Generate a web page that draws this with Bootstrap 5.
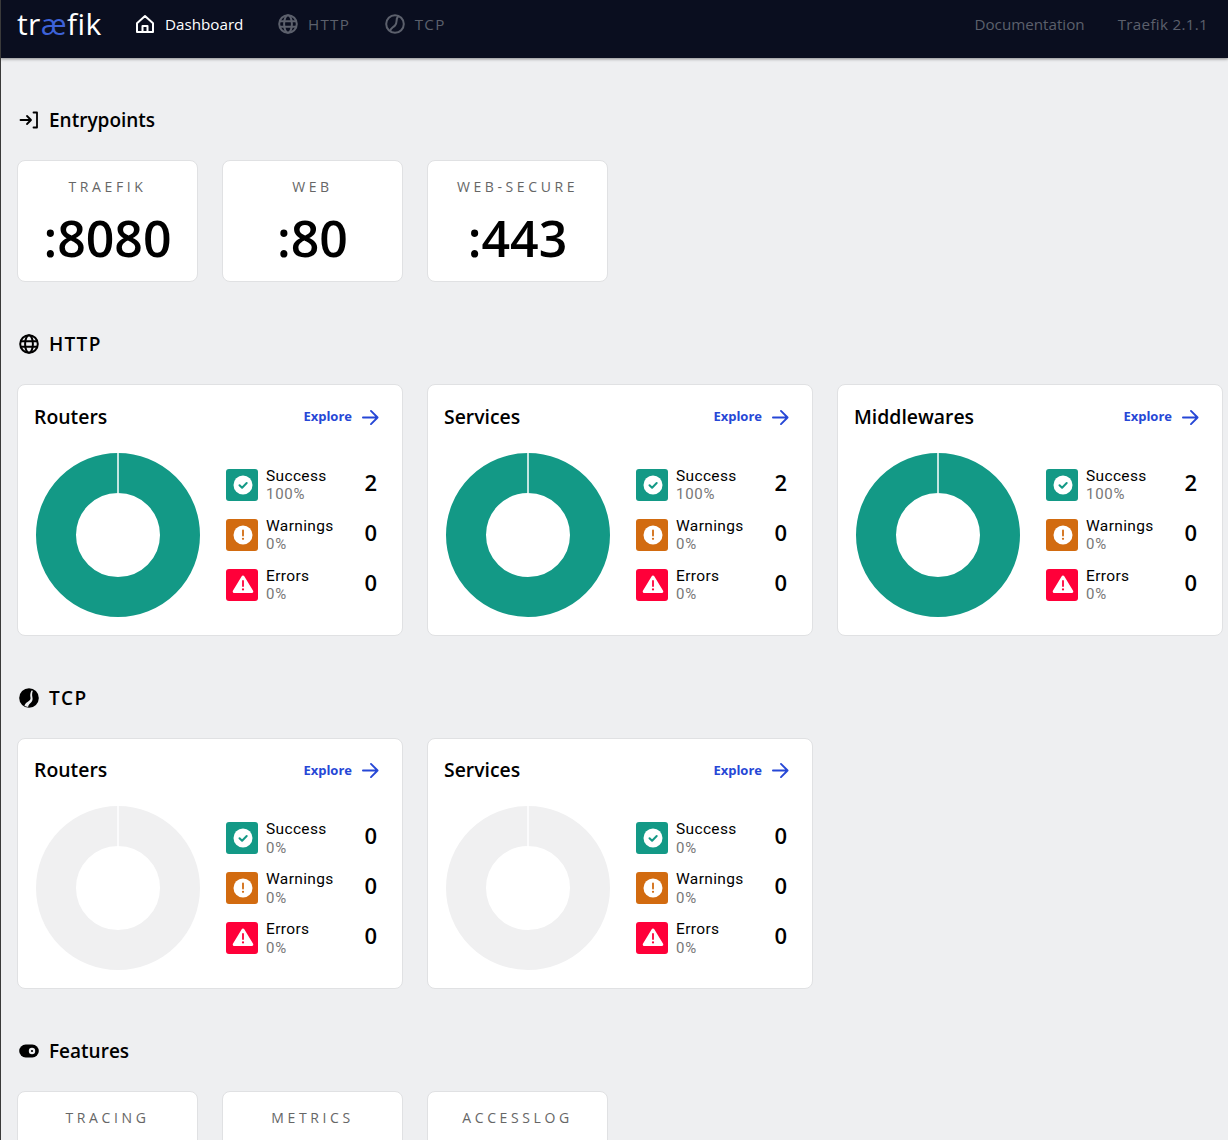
<!doctype html>
<html lang="en">
<head>
<meta charset="utf-8">
<title>Traefik</title>
<link href="https://cdn.jsdelivr.net/npm/bootstrap@5.3.0/dist/css/bootstrap.min.css" rel="stylesheet">
<style>
html,body{height:1140px;overflow:hidden}
body{background:#eeeff1;font-family:"Open Sans","Noto Sans",sans-serif;color:#000;border-left:1px solid #3a3a3a}
.topbar{height:58px;background:#0a0e1f;margin-left:-1px;padding:0 20px 10px 17px;box-shadow:0 1px 3px rgba(0,0,0,.45)}
.brand{font-size:30px;line-height:1;color:#fff;font-weight:500;letter-spacing:.4px;width:85px;margin-right:33px;white-space:nowrap}
.brand span{color:#3d62d8}
.tab{display:flex;align-items:center;gap:10px;font-size:15.2px;color:#5c606c;margin-right:34.5px;text-decoration:none}
.tab.on{color:#fff}
.tab svg{width:20px;height:20px}
.caps{letter-spacing:1.3px}
.tab-r{margin-right:0;margin-left:33px}
.ver{letter-spacing:.3px}
.page{padding:48px 0 0 16px}
.sect{margin-bottom:48px}
.sect-h{height:28px;margin-bottom:26px;font-size:19px;font-weight:600;line-height:28px;gap:10px;padding-left:2px}
.sect-h svg{width:20px;height:20px;flex:none}
.sect-caps{letter-spacing:1.3px}
.tile{width:181px;height:122px;background:#fff;border:1px solid #e0e1e3;border-radius:8px;text-align:center;flex:none}
.tile-l{font-size:14px;letter-spacing:3.6px;color:#666;line-height:18px;padding-top:17px}
.tile-v{font-size:50px;font-weight:600;line-height:60px;margin-top:12px}
.panel{width:386px;height:251.5px;background:#fff;border:1px solid #e0e1e3;border-radius:8px;padding:15.75px 16px 0;flex:none}
.panel-h{height:31.75px;margin-bottom:20px}
.panel-t{font-size:19.4px;font-weight:600;line-height:31px;padding-bottom:1px}
.explore{font-size:13px;font-weight:700;color:#2647d6;text-decoration:none;gap:10px;padding-right:7px;margin-top:1px}
.explore svg{width:17px;height:17px}
.donut{width:164px;height:164px;margin-left:2px;margin-right:26px;flex:none}
.stats{width:151px;padding-top:16px}
.stat{height:32px;margin-bottom:18px}
.ico{width:32px;height:32px;border-radius:3px;flex:none;margin-right:8px}
.ico svg{width:32px;height:32px;display:block}
.i-ok{background:#139986}.i-warn{background:#d26b10}.i-err{background:#ff0039}
.stat-txt{font-family:Roboto,"Open Sans",sans-serif;line-height:1}
.stat-l{font-size:15.5px;line-height:18px;margin-top:-2px;letter-spacing:.35px}
.stat-p{font-size:15px;line-height:18px;margin-top:.75px;color:#777;letter-spacing:.7px}
.stat-v{font-size:22px;font-weight:600;line-height:26px;margin-left:auto;margin-top:.25px}
</style>
</head>
<body>
<svg width="0" height="0" class="position-absolute">
<defs>
<symbol id="s-ok" viewBox="0 0 32 32"><circle cx="17" cy="16" r="9.5" fill="#fff"/><path d="M13.5 16.2l2.6 2.6 4.6-4.8" fill="none" stroke="#139986" stroke-width="2" stroke-linecap="round" stroke-linejoin="round"/></symbol>
<symbol id="s-warn" viewBox="0 0 32 32"><circle cx="17" cy="16" r="9.5" fill="#fff"/><path d="M17 11.5v5" stroke="#d26b10" stroke-width="1.8" stroke-linecap="round"/><circle cx="17" cy="19.8" r="1.1" fill="#d26b10"/></symbol>
<symbol id="s-err" viewBox="0 0 32 32"><path d="M17 8l8.8 14.5H8.2z" fill="#fff" stroke="#fff" stroke-width="3" stroke-linejoin="round"/><path d="M17 12v5" stroke="#ff0039" stroke-width="1.8" stroke-linecap="round"/><circle cx="17" cy="20.4" r="1.1" fill="#ff0039"/></symbol>
<symbol id="s-arrow" viewBox="0 0 18 18"><path d="M1 9h15.500M9.500 2l7 7-7 7" fill="none" stroke="#2647d6" stroke-width="2" stroke-linecap="round" stroke-linejoin="round"/></symbol>
<symbol id="s-globe" viewBox="0 0 20 20"><g fill="none" stroke="currentColor" stroke-width="2"><circle cx="10" cy="10" r="8.8"/><ellipse cx="10" cy="10" rx="3.9" ry="8.8"/><path d="M1.5 7.2h17M1.5 12.8h17"/></g></symbol>
<symbol id="s-donut-ok" viewBox="0 0 164 164"><circle cx="82" cy="82" r="62" fill="none" stroke="#139986" stroke-width="40"/><path d="M82 0v40" stroke="#fff" stroke-width="1.5"/></symbol>
<symbol id="s-donut-none" viewBox="0 0 164 164"><circle cx="82" cy="82" r="62" fill="none" stroke="#f0f0f1" stroke-width="40"/><path d="M82 0v40" stroke="#fff" stroke-width="1.5"/></symbol>
</defs>
</svg>

<nav class="topbar d-flex align-items-center">
  <div class="brand">tr<span>æ</span>fik</div>
  <a class="tab on" href="#"><svg viewBox="0 0 20 20"><path d="M2 9.2 10 2l8 7.2V18H2zM7.5 18v-6h5v6" fill="none" stroke="#fff" stroke-width="2" stroke-linejoin="round"/></svg>Dashboard</a>
  <a class="tab" href="#"><svg><use href="#s-globe"/></svg><span class="caps">HTTP</span></a>
  <a class="tab" href="#"><svg viewBox="0 0 20 20"><g fill="none" stroke="#5c606c" stroke-width="2"><circle cx="10" cy="10" r="8.8"/><path d="M13.500 2C10 5 13 8.500 10 11.500 7.500 14 5.500 14 5 17.500"/></g></svg><span class="caps">TCP</span></a>
  <a class="tab tab-r ms-auto" href="#">Documentation</a>
  <a class="tab tab-r ver" href="#">Traefik 2.1.1</a>
</nav>

<main class="page">
  <section class="sect">
    <h2 class="sect-h d-flex align-items-center"><svg viewBox="0 0 20 20"><path d="M1.5 10h10M8 6l4 4-4 4M14.500 2.500H18v15h-3.500" fill="none" stroke="#000" stroke-width="1.8" stroke-linecap="round" stroke-linejoin="round"/></svg>Entrypoints</h2>
    <div class="d-flex gap-4">
      <div class="tile"><div class="tile-l">TRAEFIK</div><div class="tile-v">:8080</div></div>
      <div class="tile"><div class="tile-l">WEB</div><div class="tile-v">:80</div></div>
      <div class="tile"><div class="tile-l">WEB-SECURE</div><div class="tile-v">:443</div></div>
    </div>
  </section>

  <section class="sect">
    <h2 class="sect-h d-flex align-items-center"><svg><use href="#s-globe"/></svg><span class="sect-caps">HTTP</span></h2>
    <div class="d-flex gap-4">
      <div class="panel">
        <div class="panel-h d-flex align-items-center justify-content-between"><span class="panel-t">Routers</span><a class="explore d-flex align-items-center" href="#">Explore<svg><use href="#s-arrow"/></svg></a></div>
        <div class="d-flex">
          <svg class="donut"><use href="#s-donut-ok"/></svg>
          <div class="stats">
            <div class="stat d-flex"><div class="ico i-ok"><svg><use href="#s-ok"/></svg></div><div class="stat-txt"><div class="stat-l">Success</div><div class="stat-p">100%</div></div><div class="stat-v">2</div></div>
            <div class="stat d-flex"><div class="ico i-warn"><svg><use href="#s-warn"/></svg></div><div class="stat-txt"><div class="stat-l">Warnings</div><div class="stat-p">0%</div></div><div class="stat-v">0</div></div>
            <div class="stat d-flex"><div class="ico i-err"><svg><use href="#s-err"/></svg></div><div class="stat-txt"><div class="stat-l">Errors</div><div class="stat-p">0%</div></div><div class="stat-v">0</div></div>
          </div>
        </div>
      </div>
      <div class="panel">
        <div class="panel-h d-flex align-items-center justify-content-between"><span class="panel-t">Services</span><a class="explore d-flex align-items-center" href="#">Explore<svg><use href="#s-arrow"/></svg></a></div>
        <div class="d-flex">
          <svg class="donut"><use href="#s-donut-ok"/></svg>
          <div class="stats">
            <div class="stat d-flex"><div class="ico i-ok"><svg><use href="#s-ok"/></svg></div><div class="stat-txt"><div class="stat-l">Success</div><div class="stat-p">100%</div></div><div class="stat-v">2</div></div>
            <div class="stat d-flex"><div class="ico i-warn"><svg><use href="#s-warn"/></svg></div><div class="stat-txt"><div class="stat-l">Warnings</div><div class="stat-p">0%</div></div><div class="stat-v">0</div></div>
            <div class="stat d-flex"><div class="ico i-err"><svg><use href="#s-err"/></svg></div><div class="stat-txt"><div class="stat-l">Errors</div><div class="stat-p">0%</div></div><div class="stat-v">0</div></div>
          </div>
        </div>
      </div>
      <div class="panel">
        <div class="panel-h d-flex align-items-center justify-content-between"><span class="panel-t">Middlewares</span><a class="explore d-flex align-items-center" href="#">Explore<svg><use href="#s-arrow"/></svg></a></div>
        <div class="d-flex">
          <svg class="donut"><use href="#s-donut-ok"/></svg>
          <div class="stats">
            <div class="stat d-flex"><div class="ico i-ok"><svg><use href="#s-ok"/></svg></div><div class="stat-txt"><div class="stat-l">Success</div><div class="stat-p">100%</div></div><div class="stat-v">2</div></div>
            <div class="stat d-flex"><div class="ico i-warn"><svg><use href="#s-warn"/></svg></div><div class="stat-txt"><div class="stat-l">Warnings</div><div class="stat-p">0%</div></div><div class="stat-v">0</div></div>
            <div class="stat d-flex"><div class="ico i-err"><svg><use href="#s-err"/></svg></div><div class="stat-txt"><div class="stat-l">Errors</div><div class="stat-p">0%</div></div><div class="stat-v">0</div></div>
          </div>
        </div>
      </div>
    </div>
  </section>

  <section class="sect">
    <h2 class="sect-h d-flex align-items-center"><svg viewBox="0 0 20 20"><circle cx="10" cy="10" r="9.8" fill="#000"/><path d="M12.500 2.500C11 5.500 11 7.500 11.500 9.500 12 11.500 10.500 12.800 8.500 14 6.800 15 5.800 16.200 5.500 18l3.600 1c.2-1.600 1-2.700 2.200-3.700 2-1.800 2.700-3.600 2.100-6-.5-2.300-.4-4.500.5-6.500z" fill="#eeeff1"/></svg><span class="sect-caps">TCP</span></h2>
    <div class="d-flex gap-4">
      <div class="panel">
        <div class="panel-h d-flex align-items-center justify-content-between"><span class="panel-t">Routers</span><a class="explore d-flex align-items-center" href="#">Explore<svg><use href="#s-arrow"/></svg></a></div>
        <div class="d-flex">
          <svg class="donut"><use href="#s-donut-none"/></svg>
          <div class="stats">
            <div class="stat d-flex"><div class="ico i-ok"><svg><use href="#s-ok"/></svg></div><div class="stat-txt"><div class="stat-l">Success</div><div class="stat-p">0%</div></div><div class="stat-v">0</div></div>
            <div class="stat d-flex"><div class="ico i-warn"><svg><use href="#s-warn"/></svg></div><div class="stat-txt"><div class="stat-l">Warnings</div><div class="stat-p">0%</div></div><div class="stat-v">0</div></div>
            <div class="stat d-flex"><div class="ico i-err"><svg><use href="#s-err"/></svg></div><div class="stat-txt"><div class="stat-l">Errors</div><div class="stat-p">0%</div></div><div class="stat-v">0</div></div>
          </div>
        </div>
      </div>
      <div class="panel">
        <div class="panel-h d-flex align-items-center justify-content-between"><span class="panel-t">Services</span><a class="explore d-flex align-items-center" href="#">Explore<svg><use href="#s-arrow"/></svg></a></div>
        <div class="d-flex">
          <svg class="donut"><use href="#s-donut-none"/></svg>
          <div class="stats">
            <div class="stat d-flex"><div class="ico i-ok"><svg><use href="#s-ok"/></svg></div><div class="stat-txt"><div class="stat-l">Success</div><div class="stat-p">0%</div></div><div class="stat-v">0</div></div>
            <div class="stat d-flex"><div class="ico i-warn"><svg><use href="#s-warn"/></svg></div><div class="stat-txt"><div class="stat-l">Warnings</div><div class="stat-p">0%</div></div><div class="stat-v">0</div></div>
            <div class="stat d-flex"><div class="ico i-err"><svg><use href="#s-err"/></svg></div><div class="stat-txt"><div class="stat-l">Errors</div><div class="stat-p">0%</div></div><div class="stat-v">0</div></div>
          </div>
        </div>
      </div>
    </div>
  </section>

  <section class="sect">
    <h2 class="sect-h d-flex align-items-center"><svg viewBox="0 0 20 20"><rect x=".2" y="3.500" width="19.600" height="13" rx="6.500" fill="#000"/><circle cx="13" cy="10" r="3.200" fill="#eeeff1"/><circle cx="13" cy="10" r="1.100" fill="#000"/></svg>Features</h2>
    <div class="d-flex gap-4">
      <div class="tile"><div class="tile-l">TRACING</div></div>
      <div class="tile"><div class="tile-l">METRICS</div></div>
      <div class="tile"><div class="tile-l">ACCESSLOG</div></div>
    </div>
  </section>
</main>
<script src="https://cdn.jsdelivr.net/npm/bootstrap@5.3.0/dist/js/bootstrap.bundle.min.js"></script>
</body>
</html>
